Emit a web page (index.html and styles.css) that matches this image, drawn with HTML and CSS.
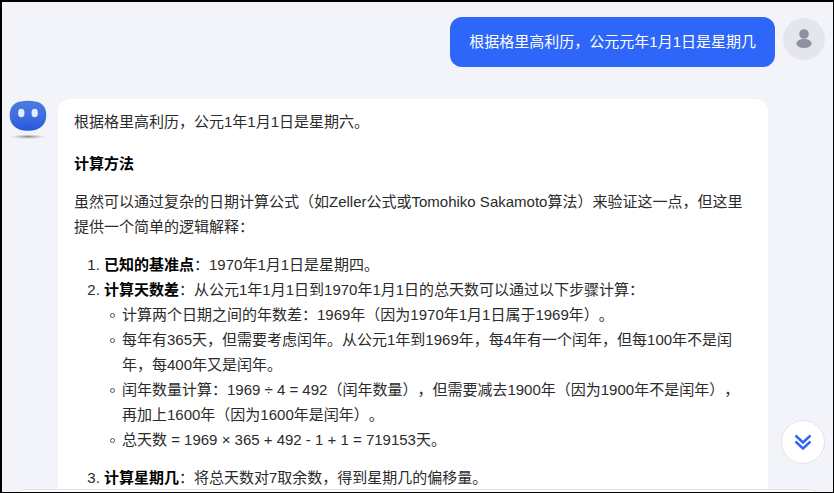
FILE: index.html
```html
<!DOCTYPE html>
<html lang="zh-CN">
<head>
<meta charset="utf-8">
<meta name="viewport" content="width=device-width, initial-scale=1">
<title>对话</title>
<link rel="stylesheet" href="styles.css">
</head>
<body>
<main class="chat">
  <section class="message message-user">
    <p class="bubble">根据格里高利历，公元元年1月1日是星期几</p>
    <svg class="user-avatar" viewBox="0 0 42 42" aria-hidden="true">
      <circle cx="21" cy="21" r="21" fill="#e5e6eb"/>
      <circle cx="21" cy="16" r="4.8" fill="#9091a0"/>
      <ellipse cx="21" cy="25.5" rx="7.6" ry="4.6" fill="#9091a0"/>
    </svg>
  </section>

  <section class="message message-bot">
    <svg class="bot-avatar" viewBox="0 0 38 41" aria-hidden="true">
      <defs>
        <linearGradient id="face" x1="0" y1="0" x2="0" y2="1">
          <stop offset="0" stop-color="#4a7ae0"/>
          <stop offset=".5" stop-color="#416fdf"/>
          <stop offset="1" stop-color="#2456dc"/>
        </linearGradient>
        <radialGradient id="shadow">
          <stop offset="0" stop-color="#777" stop-opacity=".9"/>
          <stop offset=".5" stop-color="#999" stop-opacity=".5"/>
          <stop offset="1" stop-color="#bbb" stop-opacity="0"/>
        </radialGradient>
      </defs>
      <ellipse cx="19" cy="37.700" rx="18" ry="2.4" fill="url(#shadow)"/>
      <path d="M19 1.700C30 1.700 37.300 5 37.300 16C37.300 26 31 31.700 19 31.700C7 31.700 .7 26 .7 16C.7 5 8 1.700 19 1.700Z" fill="url(#face)"/>
      <ellipse cx="12.300" cy="14" rx="3.200" ry="4.300" fill="#e4ecff"/>
      <ellipse cx="25.700" cy="14" rx="3.200" ry="4.300" fill="#e4ecff"/>
    </svg>
    <article class="answer">
      <p>根据格里高利历，公元1年1月1日是星期六。</p>
      <h3>计算方法</h3>
      <p>虽然可以通过复杂的日期计算公式（如Zeller公式或Tomohiko Sakamoto算法）来验证这一点，但这里提供一个简单的逻辑解释：</p>
      <ol>
        <li><strong>已知的基准点</strong>：1970年1月1日是星期四。</li>
        <li><strong>计算天数差</strong>：从公元1年1月1日到1970年1月1日的总天数可以通过以下步骤计算：
          <ul>
            <li>计算两个日期之间的年数差：1969年（因为1970年1月1日属于1969年）。</li>
            <li>每年有365天，但需要考虑闰年。从公元1年到1969年，每4年有一个闰年，但每100年不是闰年，每400年又是闰年。</li>
            <li>闰年数量计算：1969 ÷ 4 = 492（闰年数量），但需要减去1900年（因为1900年不是闰年），再加上1600年（因为1600年是闰年）。</li>
            <li>总天数 = 1969 × 365 + 492 - 1 + 1 = 719153天。</li>
          </ul>
        </li>
        <li><strong>计算星期几</strong>：将总天数对7取余数，得到星期几的偏移量。</li>
      </ol>
    </article>
  </section>

  <button class="to-bottom" type="button" aria-label="滚动到底部">
    <svg viewBox="0 0 18 18" aria-hidden="true">
      <path d="M1.500 2.500L9 9.500L16.500 2.500M1.500 8.500L9 15.500L16.500 8.500" fill="none" stroke="#2f66f6" stroke-width="2.400"/>
    </svg>
  </button>
  <div class="composer"></div>
</main>
</body>
</html>
```
FILE: styles.css
```css
*,
*::before {
  box-sizing: border-box;
}

body {
  margin: 0;
  font: 15px/25px "Liberation Sans", "Noto Sans CJK SC", sans-serif;
  text-spacing-trim: space-all;
  color: #2b2b2b;
}

.chat {
  position: relative;
  height: 100vh;
  overflow: hidden;
  border: solid #000;
  border-width: 2px 1px 1px 2px;
  background: #f3f4fa;
}

.message {
  display: flex;
  align-items: flex-start;
}

.message-user {
  justify-content: flex-end;
  gap: 8px;
  padding: 15px 8px 0 64px;
}

.bubble {
  margin: 0;
  padding: 12px 19px 13px;
  border-radius: 12px;
  background: #2d66f8;
  color: #fff;
}

.user-avatar {
  flex: none;
  width: 42px;
  height: 42px;
  margin-top: 1px;
}

.message-bot {
  gap: 11px;
  padding: 32px 65px 0 7px;
}

.bot-avatar {
  flex: none;
  width: 38px;
  height: 41px;
}

.answer {
  flex: 1;
  min-width: 0;
  padding: 10px 16px 32px;
  border-radius: 12px;
  background: #fff;
}

.answer p,
.answer h3,
.answer ol,
.answer ul {
  margin: 0 0 13px;
}

.answer h3 {
  margin-top: 17px;
  font-size: 15px;
  color: #000;
}

.answer ol {
  padding-left: 30px;
}

.answer ul {
  padding-left: 18px;
  list-style: none;
}

.answer ul li::before {
  content: "";
  display: inline-block;
  width: 5px;
  height: 5px;
  margin: 0 7px 2px -12px;
  border: 1px solid #555;
  border-radius: 50%;
}

.answer strong {
  color: #000;
}

.to-bottom {
  position: absolute;
  right: 8px;
  bottom: 28px;
  display: grid;
  place-items: center;
  width: 44px;
  height: 44px;
  padding: 0;
  border: 1px solid #e2e3e8;
  border-radius: 50%;
  background: #fff;
}

.to-bottom svg {
  width: 18px;
  height: 18px;
}

.composer {
  position: absolute;
  right: 12px;
  bottom: -40px;
  left: 12px;
  height: 43px;
  border: 1px solid #e2e3e8;
  border-radius: 12px;
  background: #fff;
}
```
